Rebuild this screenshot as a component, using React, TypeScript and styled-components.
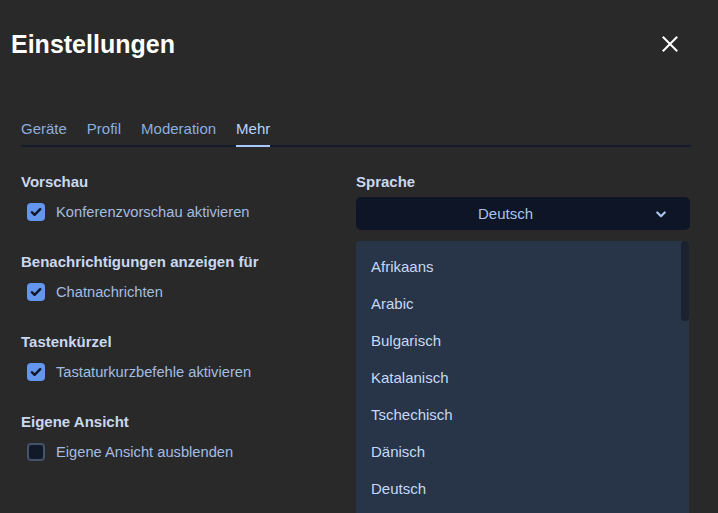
import React from "react";
import styled, { createGlobalStyle } from "styled-components";

const Global = createGlobalStyle`
  html, body { margin: 0; padding: 0; background: #292929; overflow: hidden; }
  body { font-family: "Liberation Sans", Arial, sans-serif; }
  * { box-sizing: border-box; }
`;

const Page = styled.div`
  width: 718px;
  height: 513px;
  overflow: hidden;
  background: #292929;
`;

const Header = styled.header`
  height: 88px;
  display: flex;
  align-items: center;
  justify-content: space-between;
  padding: 0 36px 0 11px;
`;

const Title = styled.h1`
  margin: 0;
  font-size: 25px;
  line-height: 30px;
  font-weight: 700;
  color: #ffffff;
`;

const CloseButton = styled.button`
  width: 24px;
  height: 24px;
  padding: 0;
  border: 0;
  background: none;
  display: flex;
  align-items: center;
  justify-content: center;
  color: #ffffff;
  cursor: pointer;
`;

const TabBar = styled.nav`
  margin: 32px 27px 0 21px;
  display: flex;
  gap: 20px;
  border-bottom: 2px solid #141b2b;
`;

const Tab = styled.button<{ $active?: boolean }>`
  background: none;
  border: 0;
  padding: 0 0 8px;
  margin-bottom: -2px;
  border-bottom: 2px solid ${(p) => (p.$active ? "#a8c7fa" : "transparent")};
  font: 15px/17px "Liberation Sans", Arial, sans-serif;
  color: ${(p) => (p.$active ? "#b9d3fb" : "#8caedf")};
  cursor: pointer;
`;

const Content = styled.div`
  display: grid;
  grid-template-columns: 335px 335px;
  padding: 26px 27px 0 21px;
`;

const Column = styled.div`
  display: flex;
  flex-direction: column;
  gap: 32px;
`;

const Section = styled.section`
  display: flex;
  flex-direction: column;
  gap: 13px;
`;

const SectionTitle = styled.h3`
  margin: 0;
  font-size: 15px;
  line-height: 17px;
  font-weight: 700;
  color: #cad8ef;
`;

const CheckRow = styled.label`
  display: flex;
  align-items: center;
  gap: 11px;
  padding-left: 6px;
  height: 18px;
  font-size: 14.7px;
  line-height: 18px;
  color: #a4bce3;
  cursor: pointer;
`;

const Box = styled.span<{ $checked: boolean }>`
  width: 18px;
  height: 18px;
  border-radius: 4px;
  display: flex;
  align-items: center;
  justify-content: center;
  background: ${(p) => (p.$checked ? "#6496ee" : "#121a2a")};
  border: ${(p) => (p.$checked ? "none" : "2px solid #46536c")};
`;

const RightColumn = styled.div`
  position: relative;
  display: flex;
  flex-direction: column;
  gap: 7px;
`;

const Select = styled.div`
  position: relative;
  height: 33px;
  width: 334px;
  background: #0e1526;
  border-radius: 5px;
  display: flex;
  align-items: center;
  justify-content: center;
  padding-right: 35px;
  font-size: 15px;
  color: #a9c3ea;
`;

const Chevron = styled.span`
  position: absolute;
  right: 24px;
  top: 14px;
  display: flex;
`;

const Dropdown = styled.ul`
  position: absolute;
  top: 68px;
  left: 0;
  width: 333px;
  height: 272px;
  margin: 0;
  padding: 7px 0 0;
  list-style: none;
  background: #283448;
  border-radius: 4px 4px 0 0;
  overflow: hidden;
`;

const Option = styled.li`
  height: 37px;
  display: flex;
  align-items: center;
  padding-left: 15px;
  font-size: 15px;
  color: #c5d9f6;
`;

const ScrollThumb = styled.span`
  position: absolute;
  right: 0;
  top: 0;
  width: 8px;
  height: 80px;
  border-radius: 4px;
  background: #1a2131;
`;

const CheckIcon = () => (
  <svg width="12" height="10" viewBox="0 0 12 10">
    <path d="M1.8 5.2 L4.6 7.8 L10.2 2.2" fill="none" stroke="#0f172a" strokeWidth="2.4" strokeLinecap="round" strokeLinejoin="round" />
  </svg>
);

const Checkbox = ({ checked, label }: { checked: boolean; label: string }) => (
  <CheckRow>
    <Box $checked={checked}>{checked && <CheckIcon />}</Box>
    {label}
  </CheckRow>
);

const sections = [
  { title: "Vorschau", label: "Konferenzvorschau aktivieren", checked: true },
  { title: "Benachrichtigungen anzeigen für", label: "Chatnachrichten", checked: true },
  { title: "Tastenkürzel", label: "Tastaturkurzbefehle aktivieren", checked: true },
  { title: "Eigene Ansicht", label: "Eigene Ansicht ausblenden", checked: false },
];

const languages = [
  "Afrikaans",
  "Arabic",
  "Bulgarisch",
  "Katalanisch",
  "Tschechisch",
  "Dänisch",
  "Deutsch",
];

export default function App() {
  return (
    <Page>
      <Global />
      <Header>
        <Title>Einstellungen</Title>
        <CloseButton aria-label="Schließen">
          <svg width="16" height="16" viewBox="0 0 16 16">
            <path d="M1.5 1.5 L14.5 14.5 M14.5 1.5 L1.5 14.5" stroke="#fff" strokeWidth="2" strokeLinecap="square" />
          </svg>
        </CloseButton>
      </Header>
      <TabBar>
        <Tab>Geräte</Tab>
        <Tab>Profil</Tab>
        <Tab>Moderation</Tab>
        <Tab $active>Mehr</Tab>
      </TabBar>
      <Content>
        <Column>
          {sections.map((s) => (
            <Section key={s.title}>
              <SectionTitle>{s.title}</SectionTitle>
              <Checkbox checked={s.checked} label={s.label} />
            </Section>
          ))}
        </Column>
        <RightColumn>
          <SectionTitle>Sprache</SectionTitle>
          <Select>
            Deutsch
            <Chevron>
              <svg width="10" height="7" viewBox="0 0 10 7">
                <path d="M1.3 1.5 L5 5.2 L8.7 1.5" fill="none" stroke="#a9c3ea" strokeWidth="2.2" strokeLinecap="round" strokeLinejoin="round" />
              </svg>
            </Chevron>
          </Select>
          <Dropdown>
            <ScrollThumb />
            {languages.map((l) => (
              <Option key={l}>{l}</Option>
            ))}
          </Dropdown>
        </RightColumn>
      </Content>
    </Page>
  );
}
